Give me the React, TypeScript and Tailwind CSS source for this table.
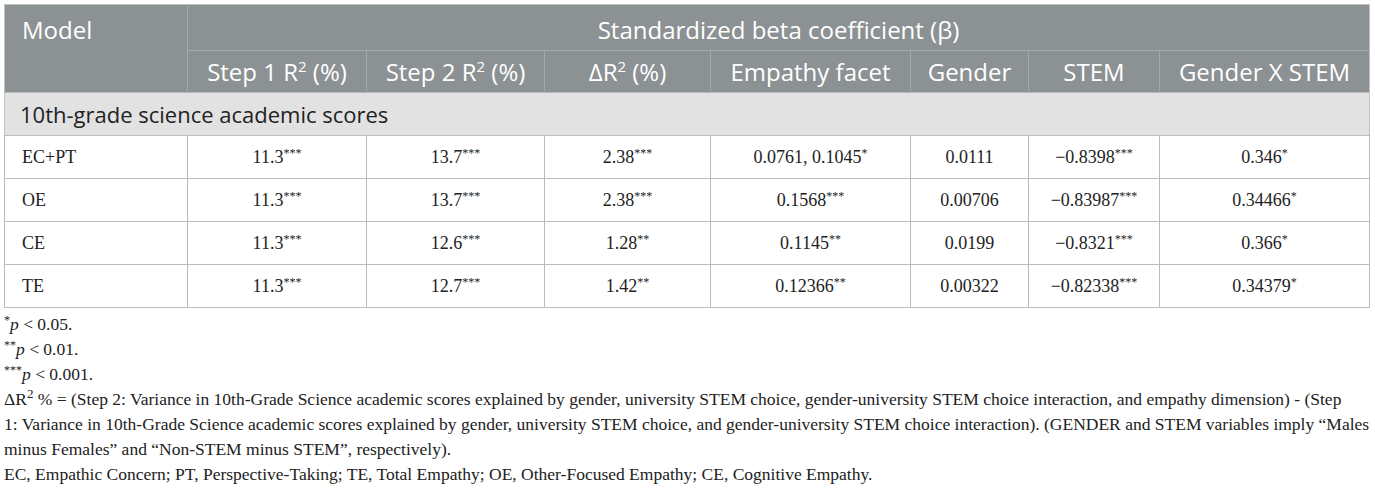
import React from "react";

const sans = "font-['Open_Sans',sans-serif]";
const serif = "font-['Liberation_Serif',serif]";

type Row = {
  model: string;
  cells: [string, string][];
};

const rows: Row[] = [
  {
    model: "EC+PT",
    cells: [
      ["11.3", "***"],
      ["13.7", "***"],
      ["2.38", "***"],
      ["0.0761, 0.1045", "*"],
      ["0.0111", ""],
      ["\u22120.8398", "***"],
      ["0.346", "*"],
    ],
  },
  {
    model: "OE",
    cells: [
      ["11.3", "***"],
      ["13.7", "***"],
      ["2.38", "***"],
      ["0.1568", "***"],
      ["0.00706", ""],
      ["\u22120.83987", "***"],
      ["0.34466", "*"],
    ],
  },
  {
    model: "CE",
    cells: [
      ["11.3", "***"],
      ["12.6", "***"],
      ["1.28", "**"],
      ["0.1145", "**"],
      ["0.0199", ""],
      ["\u22120.8321", "***"],
      ["0.366", "*"],
    ],
  },
  {
    model: "TE",
    cells: [
      ["11.3", "***"],
      ["12.7", "***"],
      ["1.42", "**"],
      ["0.12366", "**"],
      ["0.00322", ""],
      ["\u22120.82338", "***"],
      ["0.34379", "*"],
    ],
  },
];

const widths = [183, 179, 178, 166, 200, 118, 131, 210];

// small raised asterisks used in cells and notes
function Star({ children }: { children: React.ReactNode }) {
  return <sup className="text-[12px] -top-[6px]">{children}</sup>;
}

// the "2" in R²
function Sq({ size = "head" }: { size?: "head" | "note" }) {
  return (
    <sup className={size === "head" ? "text-[15px] -top-[9px]" : "text-[13px] -top-[7px]"}>2</sup>
  );
}

export default function App() {
  const heads = [
    <>Step 1 R<Sq /> (%)</>,
    <>Step 2 R<Sq /> (%)</>,
    <>ΔR<Sq /> (%)</>,
    <>Empathy facet</>,
    <>Gender</>,
    <>STEM</>,
    <>Gender X STEM</>,
  ];

  return (
    <div className="bg-white w-[1375px] h-[488px] overflow-hidden pt-[4px] pl-[4px]">
      <table className="table-fixed border-collapse w-[1366px] border border-[#bfc3c1]">
        <colgroup>
          {widths.map((w, i) => (
            <col key={i} style={{ width: w }} />
          ))}
        </colgroup>
        <thead className={`${sans} text-white text-[24px] leading-[30px]`}>
          <tr className="bg-[#8c9193] h-[46px]">
            <th
              rowSpan={2}
              className="align-top text-left font-normal pl-[17px] pt-[10px] border-r border-[#a5aaac]"
            >
              Model
            </th>
            <th colSpan={7} className="font-normal text-center align-top pt-[10px]">
              Standardized beta coefficient (β)
            </th>
          </tr>
          <tr className="bg-[#8c9193] h-[42px]">
            {heads.map((h, i) => (
              <th
                key={i}
                className="font-normal text-center pt-[1px] border-t border-r border-[#a5aaac] last:border-r-0"
              >
                {h}
              </th>
            ))}
          </tr>
        </thead>
        <tbody>
          <tr className="bg-[#e1e2e1] h-[43px]">
            <td
              colSpan={8}
              className={`${sans} text-[22px] text-[#222] pl-[15px] pt-[1px] border-t border-[#b9b9b9]`}
            >
              10th-grade science academic scores
            </td>
          </tr>
          {rows.map((r) => (
            <tr key={r.model} className={`${serif} text-[18px] text-[#222] h-[43px]`}>
              <td className="pl-[17px] border border-[#bcbcbc]">{r.model}</td>
              {r.cells.map(([v, s], i) => (
                <td key={i} className="text-center border border-[#bcbcbc]">
                  {v}
                  {s && <Star>{s}</Star>}
                </td>
              ))}
            </tr>
          ))}
        </tbody>
      </table>

      <div
        className={`${serif} text-[17.5px] text-[#222] leading-[25px] mt-[4px] whitespace-nowrap`}
      >
        <p>
          <Star>*</Star>
          <i>p</i> &lt; 0.05.
        </p>
        <p>
          <Star>**</Star>
          <i>p</i> &lt; 0.01.
        </p>
        <p>
          <Star>***</Star>
          <i>p</i> &lt; 0.001.
        </p>
        <p>
          ΔR<Sq size="note" /> % = (Step 2: Variance in 10th-Grade Science academic scores explained
          by gender, university STEM choice, gender-university STEM choice interaction, and empathy
          dimension) - (Step
        </p>
        <p>
          1: Variance in 10th-Grade Science academic scores explained by gender, university STEM
          choice, and gender-university STEM choice interaction). (GENDER and STEM variables imply
          “Males
        </p>
        <p>minus Females” and “Non-STEM minus STEM”, respectively).</p>
        <p>
          EC, Empathic Concern; PT, Perspective-Taking; TE, Total Empathy; OE, Other-Focused Empathy;
          CE, Cognitive Empathy.
        </p>
      </div>
    </div>
  );
}
